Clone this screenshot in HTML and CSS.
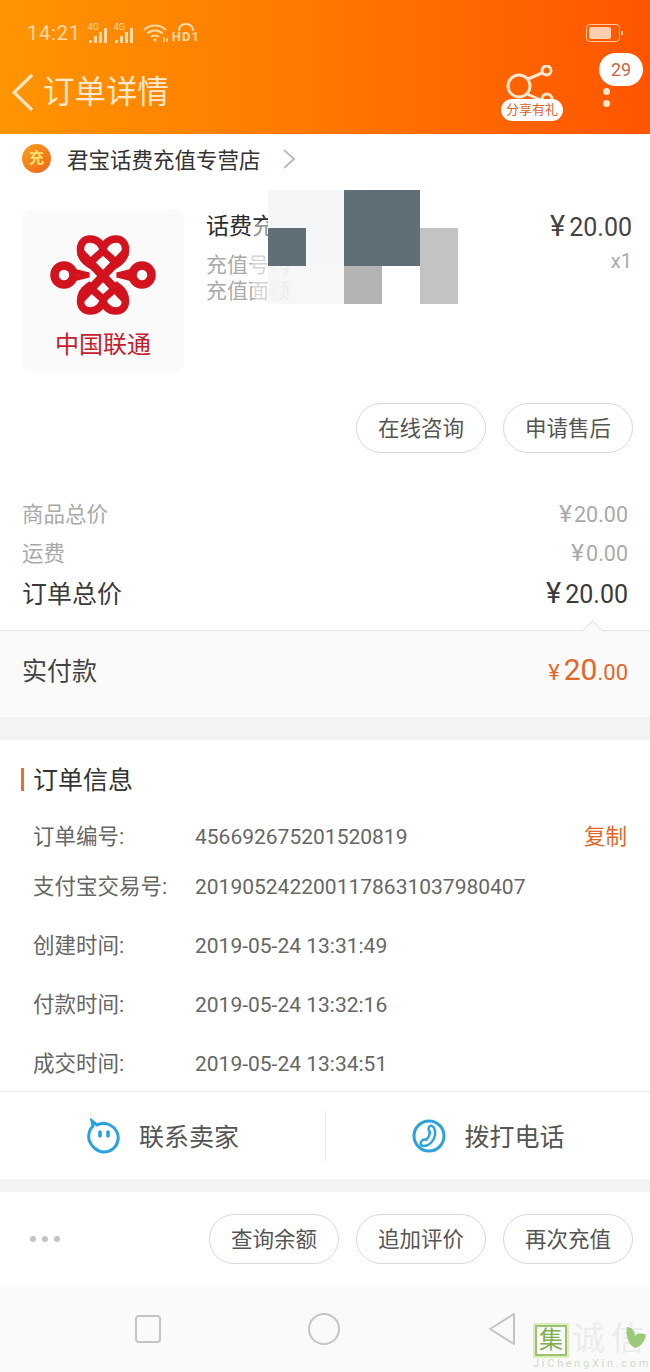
FILE: index.html
```html
<!DOCTYPE html>
<html lang="zh-CN">
<head>
    <meta charset="UTF-8">
    <meta name="viewport" content="width=device-width, initial-scale=1.0">
    <title>订单详情</title>
    <link rel="stylesheet" href="styles.css">
</head>
<body>
    <div class="page">
        <!-- 顶部橙色头部 -->
        <header class="header">
            <div class="status">
                <span class="time">14:21</span>
                <span class="sim"><i>4G</i>
                    <svg width="22" height="16" viewBox="0 0 22 16"><path d="M1 13h3v3H1zM6 9h3v7H6zM11 5h3v11h-3zM16 1h3v15h-3z" fill="#ffd9a8"/></svg>
                </span>
                <span class="sim"><i>4G</i>
                    <svg width="22" height="16" viewBox="0 0 22 16"><path d="M1 13h3v3H1zM6 9h3v7H6zM11 5h3v11h-3zM16 1h3v15h-3z" fill="#ffd9a8"/></svg>
                </span>
                <svg class="wifi" width="26" height="20" viewBox="0 0 26 20" fill="none" stroke="#ffd9a8" stroke-width="2.2">
                    <path d="M1 7c6-6 16-6 22 0M4.500 10.500c4-4 11-4 15 0M8 14c2-2 6-2 8 0"/>
                    <circle cx="12" cy="17" r="1.500" fill="#ffd9a8" stroke="none"/>
                    <path d="M21 14v5M24 15v4" stroke-width="1.500"/>
                </svg>
                <span class="hd">
                    <svg width="20" height="8" viewBox="0 0 20 8" fill="none" stroke="#ffd9a8" stroke-width="2"><path d="M3 8C3 3 6 1 10 1s7 2 7 7"/></svg>
                    <b>HD1</b>
                </span>
                <span class="battery"><span class="battery-fill"></span></span>
            </div>
            <div class="nav">
                <svg class="back" width="23" height="39" viewBox="0 0 23 39" fill="none" stroke="#ffe3c4" stroke-width="3.200"><path d="M21 2 3 19.500 21 37"/></svg>
                <h1 class="title">订单详情</h1>
                <div class="share">
                    <svg width="62" height="58" viewBox="0 0 62 58" fill="none" stroke="#ffe6cf" stroke-width="3">
                        <circle cx="18" cy="21" r="11"/>
                        <circle cx="45.500" cy="5.500" r="4.500"/>
                        <circle cx="46" cy="34" r="5"/>
                        <path d="M27 14 41 8M26 29l16 7"/>
                    </svg>
                    <span class="share-label">分享有礼</span>
                </div>
            </div>
            <div class="badge">29</div>
            <div class="more"><span></span><span></span></div>
        </header>

        <!-- 店铺 -->
        <div class="shop">
            <span class="shop-logo">充</span>
            <span class="shop-name">君宝话费充值专营店</span>
            <svg width="14" height="20" viewBox="0 0 14 20" fill="none" stroke="#bbb" stroke-width="2"><path d="M2 1l10 9-10 9"/></svg>
        </div>

        <!-- 商品 -->
        <div class="goods">
            <div class="goods-pic">
                <svg width="110" height="82" viewBox="-55 -41 110 82" fill="none" stroke="#d2121c" stroke-width="8.500">
                    <path d="M-23-23 22 24M23-23-22 24"/>
                    <path d="M-14-11C-26-19-25-36-13-36-5-36 0-30 0-24 0-30 5-36 13-36 25-36 26-19 14-11L8-17 0-24-8-17Z" stroke-width="7.500"/>
                    <path d="M-14 11C-26 19-25 36-13 36-5 36 0 30 0 24 0 30 5 36 13 36 25 36 26 19 14 11L8 17 0 24-8 17Z" stroke-width="7.500"/>
                    <circle cx="-39" cy="0" r="9.500"/>
                    <circle cx="39" cy="0" r="9.500"/>
                    <path d="M-30-4-14 0-30 4M30-4 14 0 30 4" stroke-width="5"/>
                </svg>
                <span class="goods-brand">中国联通</span>
            </div>
            <div class="goods-info">
                <div class="goods-name">话费充值缴费</div>
                <div class="goods-desc">充值号码</div>
                <div class="goods-desc">充值面额</div>
            </div>
            <div class="goods-price">
                <div class="price-num"><span class="yen">¥</span>20.00</div>
                <div class="price-count">x1</div>
            </div>
            <!-- 打码 -->
            <div class="smear"></div>
            <div class="mosaic">
                <i class="m-light"></i><i class="m-light"></i><i class="m-dark"></i><i class="m-dark"></i><i></i>
                <i class="m-dark"></i><i class="m-light"></i><i class="m-dark"></i><i class="m-dark"></i><i class="m-gray"></i>
                <i class="m-pale"></i><i class="m-pale"></i><i class="m-mid"></i><i class="m-white"></i><i class="m-gray"></i>
            </div>
        </div>

        <div class="btns goods-btns">
            <span class="btn">在线咨询</span>
            <span class="btn">申请售后</span>
        </div>

        <!-- 价格 -->
        <div class="fee">
            <div class="fee-row"><span>商品总价</span><span><span class="yen">¥</span>20.00</span></div>
            <div class="fee-row"><span>运费</span><span><span class="yen">¥</span>0.00</span></div>
            <div class="fee-row fee-total"><span>订单总价</span><span><span class="yen">¥</span>20.00</span></div>
        </div>
        <div class="pay">
            <span class="pay-label">实付款</span>
            <span class="pay-num"><small class="yen">¥</small>20<small>.00</small></span>
        </div>

        <div class="gap gap-big"></div>

        <!-- 订单信息 -->
        <div class="info">
            <h2 class="info-title">订单信息</h2>
            <div class="info-list">
                <div class="info-row"><span class="info-label">订单编号:</span><span>456692675201520819</span><span class="copy">复制</span></div>
                <div class="info-row info-row-near"><span class="info-label">支付宝交易号:</span><span>2019052422001178631037980407</span></div>
                <div class="info-row"><span class="info-label">创建时间:</span><span>2019-05-24 13:31:49</span></div>
                <div class="info-row"><span class="info-label">付款时间:</span><span>2019-05-24 13:32:16</span></div>
                <div class="info-row"><span class="info-label">成交时间:</span><span>2019-05-24 13:34:51</span></div>
            </div>
        </div>

        <!-- 联系 -->
        <div class="contact">
            <div class="contact-item">
                <svg width="36" height="36" viewBox="0 0 36 36" fill="none" stroke="#2aa3dc" stroke-width="3">
                    <path d="M6 3l5 4c4-2 9-2 13 0 6 3 9 9 8 15-1 7-7 12-14 12S5 28 3 22C2 16 4 11 7 8z"/>
                    <path d="M14 14v4M22 14v4" stroke-width="3.600" stroke-linecap="round"/>
                </svg>
                <span>联系卖家</span>
            </div>
            <div class="contact-item contact-right">
                <svg width="36" height="36" viewBox="0 0 36 36" fill="none" stroke="#2aa3dc" stroke-width="3">
                    <circle cx="18" cy="18" r="15"/>
                    <path d="M19 8c3-1 6 3 5 9-1 6-6 11-11 11-3 0-4-2-3-4 1-2 3-3 5-2 2-2 4-5 4-8-2-1-2-5 0-6z" stroke-width="2.400"/>
                </svg>
                <span>拨打电话</span>
            </div>
        </div>

        <div class="gap"></div>

        <!-- 底部操作 -->
        <div class="actions">
            <div class="dots"><span></span><span></span><span></span></div>
            <div class="btns">
                <span class="btn">查询余额</span>
                <span class="btn">追加评价</span>
                <span class="btn">再次充值</span>
            </div>
        </div>

        <!-- 系统导航栏 -->
        <div class="sysbar">
            <span class="sys-square"></span>
            <span class="sys-circle"></span>
            <svg width="30" height="34" viewBox="0 0 30 34" fill="none" stroke="#c4c4c4" stroke-width="2" stroke-linejoin="round"><path d="M27 2 3 17l24 15z"/></svg>
        </div>

        <!-- 水印 -->
        <div class="mark">
            <div class="mark-top">
                <span class="mark-box">集</span>
                <span class="mark-cn">诚信</span>
                <svg class="mark-heart" width="24" height="30" viewBox="0 0 24 30"><path d="M3 2c5 0 8 4 8 9 2-3 7-3 11-1-1 8-7 12-11 13C5 21 1 10 3 2z" fill="#9bc97a"/></svg>
            </div>
            <div class="mark-en">JiChengXin.com</div>
        </div>
    </div>
</body>
</html>
```

FILE: styles.css
```css
* {
    box-sizing: border-box;
}
body {
    margin: 0;
    background-color: #fff;
    font-family: Roboto, "Noto Sans CJK SC", sans-serif;
    color: #333;
}
h1, h2 {
    margin: 0;
    font-weight: 400;
}
.page {
    position: relative;
    width: 650px;
    height: 1372px;
    overflow: hidden;
}
/* 人民币符号比数字略大 */
.yen {
    font-size: 1.15em;
    line-height: 1;
}

/* 头部 */
.header {
    position: relative;
    height: 134px;
    padding-top: 11px;
    background: linear-gradient(90deg, #ff9500 0%, #ff7a00 45%, #ff5500 100%);
}
.status {
    display: flex;
    align-items: center;
    height: 44px;
    padding: 0 30px 0 27px;
    color: #ffd9a8;
}
.time {
    font-size: 20px;
    letter-spacing: 0.8px;
    margin-right: 7px;
}
.sim {
    position: relative;
    width: 24px;
    height: 20px;
    margin-right: 2px;
    display: flex;
    align-items: flex-end;
}
.sim i {
    position: absolute;
    top: -1px;
    left: 0;
    font-style: normal;
    font-size: 9px;
    line-height: 10px;
}
.wifi {
    margin-left: 3px;
}
.hd {
    display: flex;
    flex-direction: column;
    align-items: center;
    margin-left: 3px;
    line-height: 12px;
}
.hd svg {
    display: block;
}
.hd b {
    font-size: 13px;
    line-height: 12px;
    letter-spacing: 1px;
}
.battery {
    position: relative;
    display: block;
    width: 34px;
    height: 18px;
    margin-left: auto;
    padding: 2px;
    border: 1px solid #ffc9a0;
    border-radius: 4px;
}
.battery::after {
    content: '';
    position: absolute;
    top: 6px;
    right: -4px;
    width: 2px;
    height: 4px;
    background-color: #ffc9a0;
}
.battery-fill {
    display: block;
    width: 22px;
    height: 100%;
    border-radius: 2px;
    background-color: #ffcfb0;
}
.nav {
    display: flex;
    align-items: center;
    height: 74px;
    padding-left: 11px;
}
.back {
    flex: none;
}
.title {
    margin-left: 9px;
    padding-top: 2px;
    font-size: 31.500px;
    line-height: 40px;
    color: #ffe9d2;
}
.share {
    position: relative;
    width: 62px;
    height: 58px;
    margin-left: auto;
    margin-right: 87px;
}
.share svg {
    display: block;
    margin-top: 2px;
}
.share-label {
    position: absolute;
    left: 0;
    bottom: 0;
    width: 62px;
    height: 22px;
    border-radius: 11px;
    background-color: #fff;
    color: #e0602a;
    font-size: 13px;
    line-height: 22px;
    text-align: center;
}
.badge {
    position: absolute;
    top: 53px;
    left: 599px;
    width: 44px;
    height: 33px;
    border-radius: 17px;
    background-color: #fff;
    color: #c9663f;
    font-size: 18px;
    line-height: 33px;
    text-align: center;
}
.more {
    position: absolute;
    top: 88px;
    left: 603px;
}
.more span {
    display: block;
    width: 7px;
    height: 7px;
    margin-bottom: 5px;
    border-radius: 50%;
    background-color: #ffe6cf;
}

/* 店铺 */
.shop {
    display: flex;
    align-items: center;
    height: 51px;
    padding: 0 0 2px 22px;
    font-size: 21.500px;
}
.shop-logo {
    width: 29px;
    height: 29px;
    border-radius: 50%;
    background: linear-gradient(135deg, #f9a01b, #f0641e);
    color: #ffe36a;
    font-size: 15px;
    font-weight: 700;
    line-height: 29px;
    text-align: center;
}
.shop-name {
    margin: 0 21px 0 16px;
}

/* 商品 */
.goods {
    position: relative;
    display: flex;
    height: 187px;
    padding: 24px 18px 0 22px;
}
.goods-pic {
    display: flex;
    flex-direction: column;
    align-items: center;
    flex: none;
    width: 162px;
    height: 163px;
    padding-top: 25px;
    border-radius: 10px;
    background-color: #fafafa;
}
.goods-brand {
    margin-top: 12px;
    font-size: 24px;
    line-height: 34px;
    color: #c4202c;
}
.goods-info {
    flex: 1;
    margin-left: 22px;
    padding-top: 1px;
}
.goods-name {
    margin-bottom: 8px;
    font-size: 23px;
    line-height: 34px;
    color: #2c2c2c;
}
.goods-desc {
    font-size: 21px;
    line-height: 26px;
    color: #aaa;
}
.goods-price {
    text-align: right;
}
.price-num {
    font-size: 25px;
    line-height: 38px;
    color: #444;
}
.price-num .yen {
    margin-right: 4px;
}
.price-count {
    font-size: 20px;
    line-height: 28px;
    color: #aaa;
}
.smear {
    position: absolute;
    top: 35px;
    left: 252px;
    width: 30px;
    height: 85px;
    border-radius: 15px;
    background-color: rgba(255, 255, 255, 0.5);
}
.mosaic {
    position: absolute;
    top: 5px;
    left: 268px;
    display: grid;
    grid-template-columns: repeat(5, 38px);
    grid-auto-rows: 38px;
}
.m-dark { background-color: #5f6e77; }
.m-light { background-color: #f5f6f7; }
.m-pale { background-color: rgba(246, 246, 246, 0.85); }
.m-gray { background-color: #c3c3c3; }
.m-mid { background-color: #b4b4b4; }
.m-white { background-color: #fff; }

/* 按钮 */
.btns {
    display: flex;
    justify-content: flex-end;
    gap: 17px;
}
.goods-btns {
    height: 50px;
    padding-right: 17px;
    margin-top: 31px;
}
.btn {
    width: 130px;
    height: 50px;
    border: 1px solid #d8d8d8;
    border-radius: 25px;
    background-color: #fff;
    font-size: 21.500px;
    line-height: 49px;
    text-align: center;
    color: #555;
}

/* 价格 */
.fee {
    height: 178px;
    padding: 42px 22px 0;
    border-bottom: 1px solid #e4e4e4;
}
.fee-row {
    display: flex;
    justify-content: space-between;
    height: 39px;
    font-size: 21.500px;
    line-height: 39px;
    color: #aaa;
}
.fee-row .yen {
    margin-right: 2px;
}
.fee-total {
    height: 42px;
    padding-top: 1px;
    font-size: 25px;
    line-height: 42px;
    color: #3a3a3a;
}
.fee-total .yen {
    margin-right: 4px;
}
.pay {
    position: relative;
    display: flex;
    align-items: center;
    justify-content: space-between;
    height: 86px;
    padding: 0 22px 10px;
    background-color: #fafafa;
    font-size: 25px;
    color: #444;
}
.pay::before {
    content: '';
    position: absolute;
    top: -8px;
    left: 584px;
    width: 16px;
    height: 16px;
    border-top: 1px solid #e4e4e4;
    border-left: 1px solid #e4e4e4;
    background-color: #fafafa;
    transform: rotate(45deg) scale(0.95);
}
.pay-num {
    font-size: 30px;
    color: #e2662a;
}
.pay-num small {
    font-size: 22px;
}
.pay-num .yen {
    margin-right: 4px;
}
.gap {
    height: 13px;
    background-color: #f3f3f3;
}
.gap-big {
    height: 23px;
}

/* 订单信息 */
.info {
    height: 352px;
    border-bottom: 1px solid #e8e8e8;
}
.info-title {
    position: relative;
    padding: 24px 0 0 33px;
    font-size: 25px;
    line-height: 34px;
    color: #333;
}
.info-title::before {
    content: '';
    position: absolute;
    top: 28px;
    left: 21px;
    width: 3px;
    height: 23px;
    background-color: #e8702e;
}
.info-list {
    display: flex;
    flex-direction: column;
    gap: 29px;
    padding: 24px 23px 0 33px;
}
.info-row {
    display: flex;
    height: 30px;
    font-size: 21px;
    line-height: 30px;
    color: #666;
}
.info-row-near {
    margin-top: -9px;
}
.info-label {
    width: 162px;
    flex: none;
    font-size: 21.500px;
}
.copy {
    margin-left: auto;
    font-size: 21.500px;
    color: #e2662a;
}

/* 联系 */
.contact {
    display: flex;
    align-items: center;
    height: 87px;
}
.contact-item {
    display: flex;
    align-items: center;
    justify-content: center;
    gap: 17px;
    width: 50%;
    height: 50px;
    font-size: 25px;
    color: #555;
}
.contact-item span {
    margin-top: -2px;
}
.contact-right {
    border-left: 1px solid #e8e8e8;
}

/* 底部操作 */
.actions {
    display: flex;
    align-items: center;
    justify-content: space-between;
    height: 93px;
    padding: 0 17px 0 30px;
}
.dots {
    display: flex;
    gap: 6px;
}
.dots span {
    width: 6px;
    height: 6px;
    border-radius: 50%;
    background-color: #c4c4c4;
}

/* 系统导航栏 */
.sysbar {
    display: flex;
    align-items: center;
    height: 87px;
    padding: 0 133px 0 135px;
    justify-content: space-between;
    background-color: #fafafa;
}
.sys-square {
    width: 26px;
    height: 28px;
    border: 2px solid #c4c4c4;
    border-radius: 4px;
}
.sys-circle {
    width: 32px;
    height: 32px;
    border: 2px solid #c4c4c4;
    border-radius: 50%;
}

/* 水印 */
.mark {
    position: absolute;
    top: 1322px;
    left: 530px;
    width: 120px;
}
.mark-top {
    position: relative;
    display: flex;
    height: 34px;
}
.mark-box {
    align-self: flex-end;
    width: 32px;
    height: 31px;
    margin-left: 5px;
    border: 2px solid #9cc26e;
    outline: 2px solid #dcedc0;
    color: #7fae55;
    font-size: 24px;
    line-height: 26px;
    text-align: center;
}
.mark-cn {
    margin-left: 5px;
    font-family: "Liberation Serif", "Noto Sans CJK SC", serif;
    font-size: 33px;
    line-height: 34px;
    letter-spacing: 6px;
    white-space: nowrap;
    color: #ececec;
}
.mark-heart {
    position: absolute;
    top: 3px;
    left: 94px;
}
.mark-en {
    margin-top: 2px;
    padding-left: 3px;
    font-size: 11px;
    line-height: 12px;
    letter-spacing: 2.700px;
    color: #cfdcc4;
    white-space: nowrap;
}
```
